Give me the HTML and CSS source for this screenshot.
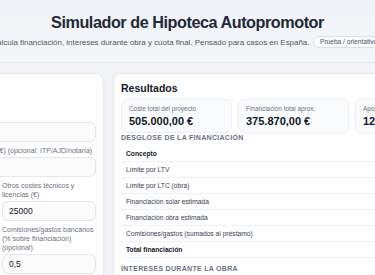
FILE: index.html
```html
<!DOCTYPE html>
<html lang="es">
<head>
<meta charset="UTF-8" />
<meta name="viewport" content="width=device-width, initial-scale=1" />
<title>Simulador de Hipoteca Autopromotor</title>
<link rel="stylesheet" href="styles.css">
</head>
<body>
  <header class="top">
    <h1>Simulador de Hipoteca Autopromotor</h1>
    <div class="sub">
      <p>Calcula financiación, intereses durante obra y cuota final. Pensado para casos en España.</p>
      <span class="pill">Prueba / orientativo</span>
    </div>
  </header>

  <main class="layout">
    <section class="panel form">
      <h2>Datos de entrada</h2>
      <div class="fields">
        <label class="field wide">
          <span>Precio del solar (€)</span>
          <input type="text" value="85000">
        </label>
        <label class="field wide">
          <span>Gastos de adquisición del solar (€) (opcional: ITP/AJD/notaría)</span>
          <input type="text" value="9000">
        </label>
        <label class="field">
          <span>Coste de construcción (€)</span>
          <input type="text" value="386000">
        </label>
        <label class="field">
          <span>Otros costes técnicos y licencias (€)</span>
          <input type="text" value="25000">
        </label>
        <label class="field">
          <span>Plazo de obra (meses)</span>
          <input type="text" value="12">
        </label>
        <label class="field">
          <span>Comisiones/gastos bancarios (% sobre financiación) (opcional)</span>
          <input type="text" value="0,5">
        </label>
      </div>
    </section>

    <section class="panel results">
      <h2>Resultados</h2>
      <div class="cards">
        <div class="stat">
          <div class="stat-label">Coste total del proyecto</div>
          <div class="stat-value">505.000,00 €</div>
        </div>
        <div class="stat">
          <div class="stat-label">Financiación total aprox.</div>
          <div class="stat-value">375.870,00 €</div>
        </div>
        <div class="stat">
          <div class="stat-label">Aportación propia necesaria</div>
          <div class="stat-value">129.130,00 €</div>
        </div>
      </div>

      <h3 class="section-title">Desglose de la financiación</h3>
      <div class="breakdown">
        <div class="row head"><span>Concepto</span><span>Importe</span></div>
        <div class="row"><span>Límite por LTV</span><span>404.000,00 €</span></div>
        <div class="row"><span>Límite por LTC (obra)</span><span>329.000,00 €</span></div>
        <div class="row"><span>Financiación solar estimada</span><span>59.500,00 €</span></div>
        <div class="row"><span>Financiación obra estimada</span><span>314.500,00 €</span></div>
        <div class="row"><span>Comisiones/gastos (sumados al préstamo)</span><span>1.870,00 €</span></div>
        <div class="row total"><span>Total financiación</span><span>375.870,00 €</span></div>
      </div>

      <h3 class="section-title next">Intereses durante la obra</h3>
      <div class="breakdown">
        <div class="row"><span>Interés medio mensual</span><span>812,40 €</span></div>
        <div class="row"><span>Total intereses obra</span><span>9.748,80 €</span></div>
      </div>
    </section>
  </main>
</body>
</html>
```

FILE: styles.css
```css
* {
  box-sizing: border-box;
}
body {
  margin: 0;
  width: 375px;
  height: 275px;
  overflow: hidden;
  font-family: "Liberation Sans", Arial, sans-serif;
  background-color: #f2f3f6;
  color: #111827;
}

/* cabecera */
.top {
  height: 63px;
  padding-top: 12px;
  display: flex;
  flex-direction: column;
  align-items: center;
  background: linear-gradient(180deg, #eff2f7, #f5f6f9);
  border-bottom: 1px solid #e3e6eb;
}
.top h1 {
  margin: 0;
  font-size: 16.2px;
  line-height: 20px;
  font-weight: 700;
  letter-spacing: -0.45px;
  color: #1f2937;
  white-space: nowrap;
}
.sub {
  margin-top: 4px;
  display: flex;
  align-items: center;
  gap: 4px;
  white-space: nowrap;
}
.sub p {
  margin: 0;
  font-size: 7.95px;
  color: #4b5563;
}
.pill {
  height: 12px;
  line-height: 10px;
  padding: 0 5.5px;
  font-size: 6.6px;
  color: #4b5563;
  background-color: #f9fafb;
  border: 1px solid #dde1e7;
  border-radius: 999px;
}

/* columnas */
.layout {
  display: flex;
  justify-content: center;
  gap: 9px;
  padding-top: 10px;
}
.panel {
  flex-shrink: 0;
  background-color: #fff;
  border: 1px solid #e6e9ee;
  border-radius: 9px;
  box-shadow: 0 1px 3px rgba(15, 23, 42, 0.05);
}
.panel h2 {
  margin: 0 0 4px;
  font-size: 10.5px;
  line-height: 14px;
  font-weight: 700;
  color: #111827;
}
.form {
  width: 214px;
  padding: 7px 7px 12px;
}
.form h2 {
  margin-bottom: 16px;
}
.fields {
  display: grid;
  grid-template-columns: 1fr 1fr;
  column-gap: 10px;
  row-gap: 4px;
  align-items: end;
}
.field {
  display: flex;
  flex-direction: column;
  gap: 2px;
  font-size: 7px;
  line-height: 9px;
  color: #6b7280;
}
.field.wide {
  grid-column: span 2;
  white-space: nowrap;
}
.field input {
  width: 100%;
  height: 20px;
  padding: 0 6px;
  font-family: inherit;
  font-size: 8.5px;
  font-weight: 500;
  color: #111827;
  background-color: #fbfbfc;
  border: 1px solid #e3e6eb;
  border-radius: 6px;
  outline: none;
}

/* resultados */
.results {
  width: 372px;
  padding: 7px 7px 12px;
}
.cards {
  display: grid;
  grid-template-columns: repeat(3, 111px);
  gap: 6px;
}
.stat {
  padding: 5px 7px 4px;
  background-color: #fafbfc;
  border: 1px solid #eceef2;
  border-radius: 7px;
}
.stat-label {
  font-size: 6.4px;
  line-height: 8px;
  color: #6b7280;
  white-space: nowrap;
}
.stat-value {
  margin-top: 2px;
  font-size: 11px;
  line-height: 13px;
  font-weight: 700;
  color: #111827;
  white-space: nowrap;
}
.section-title {
  margin: 0 0 3px;
  font-size: 7px;
  line-height: 10px;
  font-weight: 600;
  letter-spacing: 0.3px;
  text-transform: uppercase;
  color: #6b7280;
}
.section-title.next {
  margin-top: 6px;
}
.row {
  height: 16px;
  padding: 0 5px;
  display: flex;
  justify-content: space-between;
  align-items: center;
  font-size: 6.7px;
  color: #374151;
  border-bottom: 1px solid #eef0f3;
}
.row.head,
.row.total {
  font-weight: 700;
  color: #111827;
}
```
